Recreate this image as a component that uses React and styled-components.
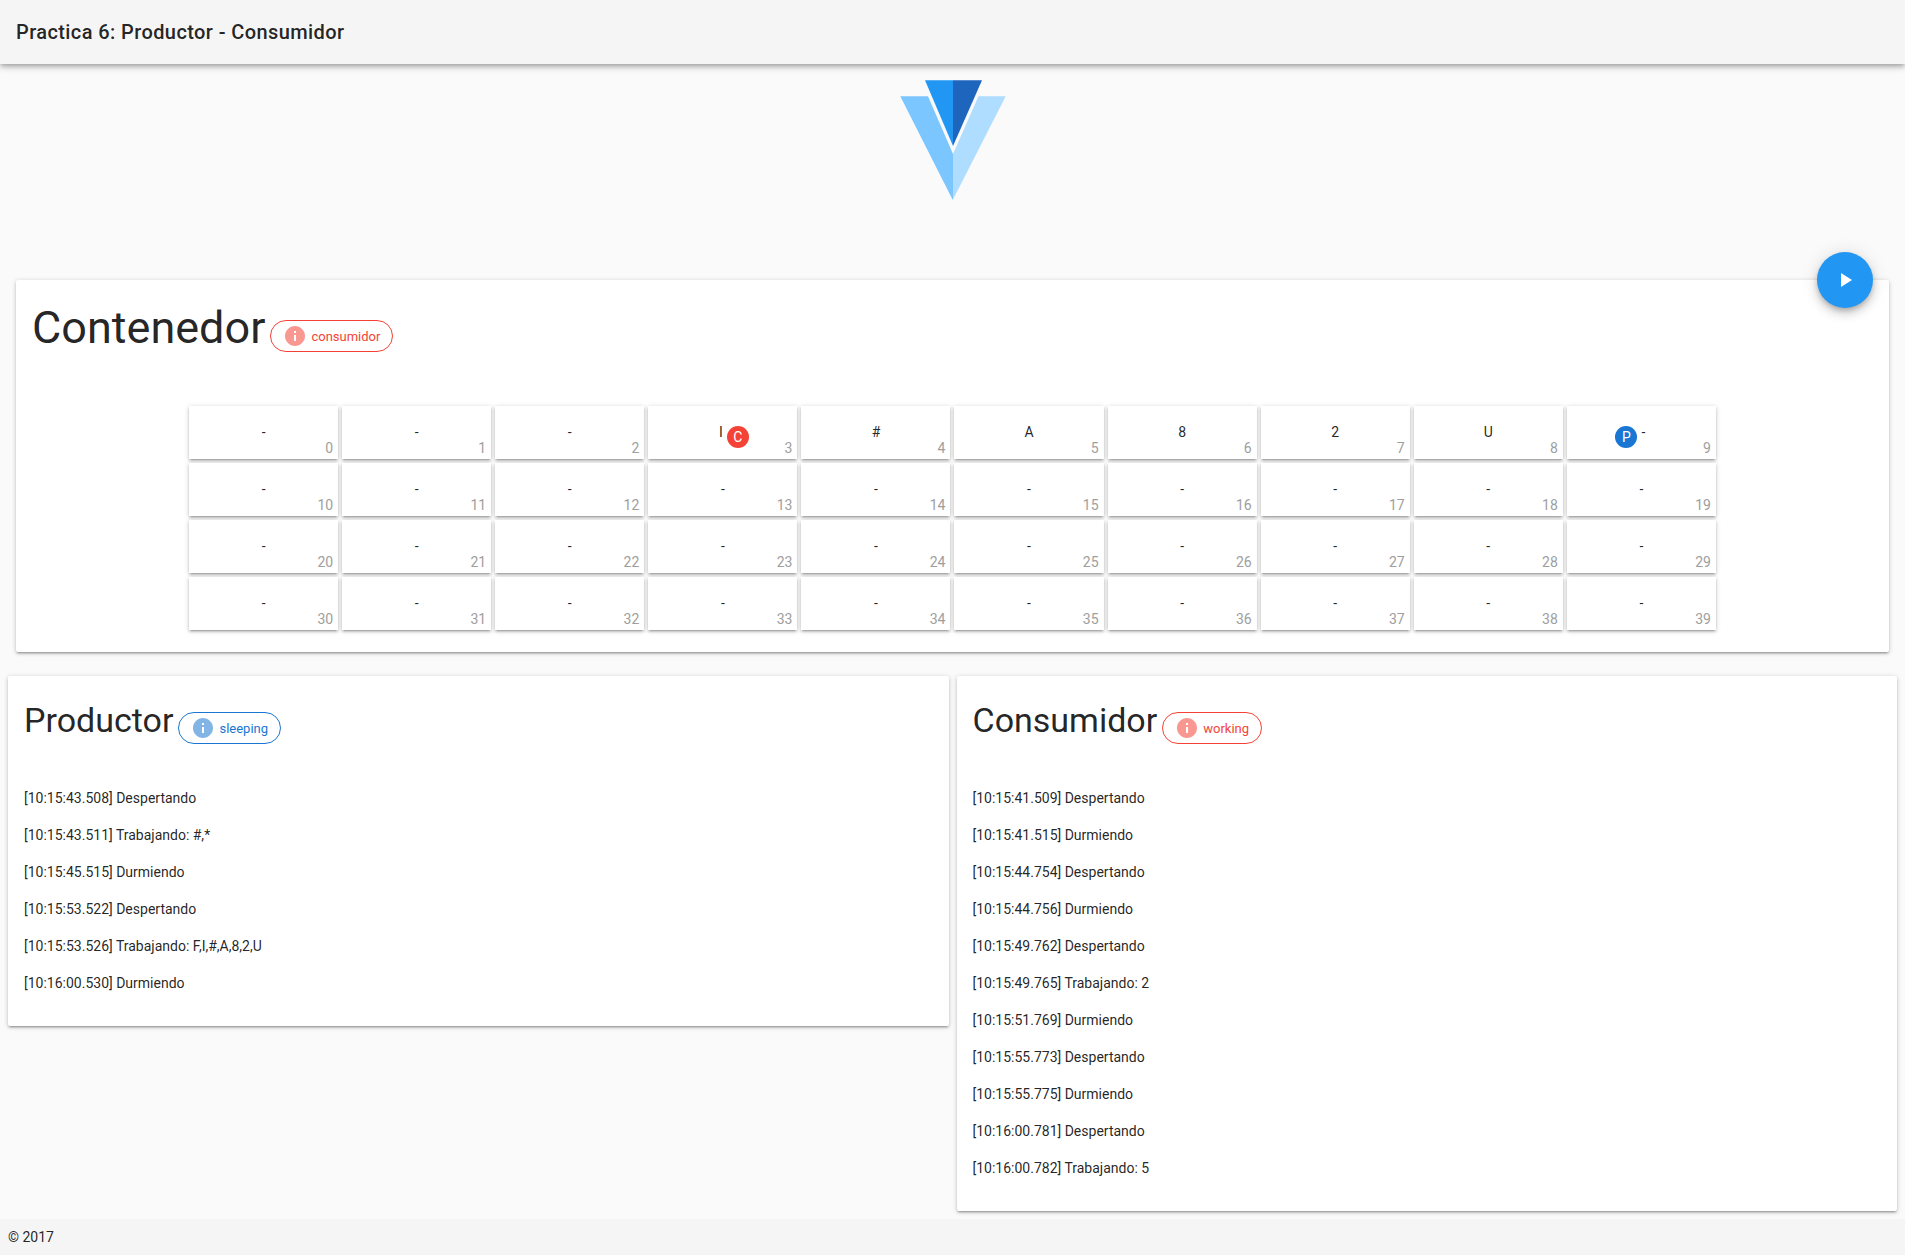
import React from 'react';
import styled, { createGlobalStyle } from 'styled-components';

const RED = '#f44336';
const BLUE = '#1976d2';

const GlobalStyle = createGlobalStyle`
  *, *::before, *::after { box-sizing: border-box; }
  body {
    margin: 0;
    background: #fafafa;
    color: rgba(0, 0, 0, 0.87);
    font-family: Roboto, "Liberation Sans", sans-serif;
    font-size: 14px;
    line-height: 21px;
  }
`;

const Page = styled.div`
  display: flex;
  flex-direction: column;
  min-height: 100vh;
`;

const Toolbar = styled.header`
  display: flex;
  align-items: center;
  height: 64px;
  padding: 0 16px;
  background: #f5f5f5;
  box-shadow: 0 2px 4px -1px rgba(0, 0, 0, 0.2), 0 4px 5px 0 rgba(0, 0, 0, 0.14),
    0 1px 10px 0 rgba(0, 0, 0, 0.12);
`;

const ToolbarTitle = styled.h1`
  margin: 0;
  font-size: 20px;
  font-weight: 500;
  line-height: 24px;
  letter-spacing: 0.02em;
`;

const Main = styled.main`
  flex: 1;
  padding-bottom: 8px;
`;

const LogoBar = styled.div`
  display: flex;
  justify-content: center;
  padding: 16px 16px 80px;

  svg { display: block; }
`;

const Card = styled.section`
  background: #fff;
  border-radius: 2px;
  box-shadow: 0 1px 5px 0 rgba(0, 0, 0, 0.2), 0 2px 2px 0 rgba(0, 0, 0, 0.14),
    0 3px 1px -2px rgba(0, 0, 0, 0.12);
`;

const BufferCard = styled(Card)`
  position: relative;
  margin: 0 16px 24px;
  padding: 24px 16px 22px;
`;

const LogCard = styled(Card)`
  flex: 1;
  padding: 24px 16px 16px;
`;

const CardHeader = styled.div`
  display: flex;
  align-items: flex-end;
  gap: 5px;
  margin-bottom: 44px;
`;

const BigTitle = styled.h2`
  margin: 0;
  font-size: 45px;
  font-weight: 400;
  line-height: 48px;
`;

const MediumTitle = styled.h2`
  margin: 0 0 4px;
  font-size: 34px;
  font-weight: 400;
  line-height: 40px;
`;

const ChipBox = styled.span`
  display: inline-flex;
  align-items: center;
  gap: 4px;
  height: 32px;
  padding: 0 12px;
  border: 1px solid ${(p) => p.$color};
  border-radius: 28px;
  color: ${(p) => p.$color};
  font-size: 13px;

  svg {
    fill: currentColor;
    opacity: 0.54;
  }
`;

const PlayButton = styled.button`
  position: absolute;
  top: -28px;
  right: 16px;
  display: flex;
  align-items: center;
  justify-content: center;
  width: 56px;
  height: 56px;
  padding: 0;
  border: 0;
  border-radius: 50%;
  background: #2196f3;
  cursor: pointer;
  box-shadow: 0 3px 5px -1px rgba(0, 0, 0, 0.2), 0 6px 10px 0 rgba(0, 0, 0, 0.14),
    0 1px 18px 0 rgba(0, 0, 0, 0.12);

  svg { fill: #fff; }
`;

const SlotGrid = styled.div`
  display: grid;
  grid-template-columns: repeat(10, 1fr);
  gap: 4px;
  width: calc((100% - 4px) * 10 / 12 - 4px);
  margin: 54px auto 0;
`;

const Slot = styled.div`
  position: relative;
  display: flex;
  justify-content: center;
  padding: 16px 0;
  background: #fff;
  box-shadow: 0 1px 5px 0 rgba(0, 0, 0, 0.2), 0 2px 2px 0 rgba(0, 0, 0, 0.14),
    0 3px 1px -2px rgba(0, 0, 0, 0.12);
`;

const SlotValue = styled.span`
  position: relative;
  padding-left: ${(p) => (p.$badge === 'left' ? 4 : 0)}px;
  padding-right: ${(p) => (p.$badge === 'right' ? 4 : 0)}px;
`;

const SlotIndex = styled.span`
  position: absolute;
  right: 5px;
  bottom: 0;
  color: #9e9e9e;
`;

const Badge = styled.span`
  position: absolute;
  top: 4px;
  ${(p) => (p.$side === 'left' ? 'right: 100%;' : 'left: 100%;')}
  width: 22px;
  height: 22px;
  border-radius: 50%;
  background: ${(p) => p.$color};
  color: #fff;
  line-height: 22px;
  text-align: center;
`;

const LogColumns = styled.div`
  display: flex;
  align-items: flex-start;
  gap: 8px;
  padding: 0 8px;
`;

const LogList = styled.div`
  p { margin: 0 0 16px; }
`;

const Footer = styled.footer`
  display: flex;
  align-items: center;
  height: 36px;
  padding: 0 8px;
  background: #f5f5f5;
`;

const VALUES = { 3: 'I', 4: '#', 5: 'A', 6: '8', 7: '2', 8: 'U' };
const POINTERS = {
  3: { letter: 'C', color: RED, side: 'right' },
  9: { letter: 'P', color: BLUE, side: 'left' },
};

const SLOTS = Array.from({ length: 40 }, (_, index) => ({
  index,
  value: VALUES[index] || '-',
  pointer: POINTERS[index],
}));

const PRODUCER_LOG = [
  '[10:15:43.508] Despertando',
  '[10:15:43.511] Trabajando: #,*',
  '[10:15:45.515] Durmiendo',
  '[10:15:53.522] Despertando',
  '[10:15:53.526] Trabajando: F,I,#,A,8,2,U',
  '[10:16:00.530] Durmiendo',
];

const CONSUMER_LOG = [
  '[10:15:41.509] Despertando',
  '[10:15:41.515] Durmiendo',
  '[10:15:44.754] Despertando',
  '[10:15:44.756] Durmiendo',
  '[10:15:49.762] Despertando',
  '[10:15:49.765] Trabajando: 2',
  '[10:15:51.769] Durmiendo',
  '[10:15:55.773] Despertando',
  '[10:15:55.775] Durmiendo',
  '[10:16:00.781] Despertando',
  '[10:16:00.782] Trabajando: 5',
];

function Logo() {
  return (
    <svg width="106" height="120" viewBox="0 0 106 120" aria-hidden="true">
      <path fill="#7bc6ff" d="M0.3 16.3H28L53 74V119.5H52.5Z" />
      <path fill="#aeddff" d="M105.7 16.3H78.5L53 74V119.5Z" />
      <path fill="#2196f3" d="M25 0.2H53V66Z" />
      <path fill="#1e66bd" d="M82 0.2H53V66Z" />
    </svg>
  );
}

function Chip({ color, children }) {
  return (
    <ChipBox $color={color}>
      <svg width="24" height="24" viewBox="0 0 24 24" aria-hidden="true">
        <path d="M12 2C6.48 2 2 6.48 2 12s4.480 10 10 10 10-4.480 10-10S17.520 2 12 2zm1 15h-2v-6h2v6zm0-8h-2V7h2v2z" />
      </svg>
      <span>{children}</span>
    </ChipBox>
  );
}

function Log({ title, status, color, entries }) {
  return (
    <LogCard>
      <CardHeader>
        <MediumTitle>{title}</MediumTitle>
        <Chip color={color}>{status}</Chip>
      </CardHeader>
      <LogList>
        {entries.map((entry) => (
          <p key={entry}>{entry}</p>
        ))}
      </LogList>
    </LogCard>
  );
}

export default function App() {
  return (
    <Page>
      <GlobalStyle />
      <Toolbar>
        <ToolbarTitle>Practica 6: Productor - Consumidor</ToolbarTitle>
      </Toolbar>
      <Main>
        <LogoBar>
          <Logo />
        </LogoBar>
        <BufferCard>
          <PlayButton type="button" aria-label="Iniciar">
            <svg width="24" height="24" viewBox="0 0 24 24" aria-hidden="true">
              <path d="M8 5v14l11-7z" />
            </svg>
          </PlayButton>
          <CardHeader>
            <BigTitle>Contenedor</BigTitle>
            <Chip color={RED}>consumidor</Chip>
          </CardHeader>
          <SlotGrid>
            {SLOTS.map(({ index, value, pointer }) => (
              <Slot key={index}>
                <SlotValue $badge={pointer && pointer.side}>
                  {value}
                  {pointer && (
                    <Badge $color={pointer.color} $side={pointer.side}>
                      {pointer.letter}
                    </Badge>
                  )}
                </SlotValue>
                <SlotIndex>{index}</SlotIndex>
              </Slot>
            ))}
          </SlotGrid>
        </BufferCard>
        <LogColumns>
          <Log title="Productor" status="sleeping" color={BLUE} entries={PRODUCER_LOG} />
          <Log title="Consumidor" status="working" color={RED} entries={CONSUMER_LOG} />
        </LogColumns>
      </Main>
      <Footer>© 2017</Footer>
    </Page>
  );
}
